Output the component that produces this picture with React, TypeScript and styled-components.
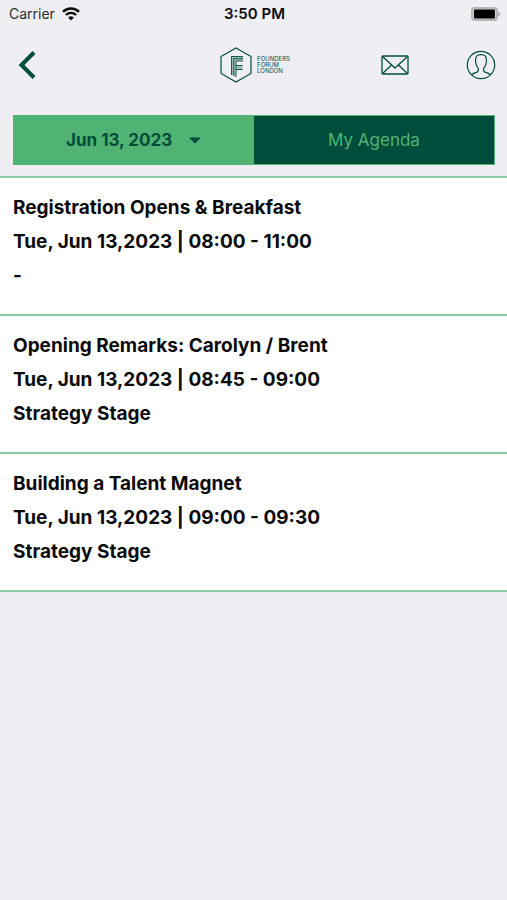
import React from 'react';
import styled, { createGlobalStyle } from 'styled-components';

const palette = {
  page: '#efeef3',
  forest: '#004d3b',
  green: '#50b374',
  line: '#8ccba3',
};

const GlobalStyle = createGlobalStyle`
  *, *::before, *::after { box-sizing: border-box; }
  body {
    margin: 0;
    background: ${palette.page};
    color: #0b0b0c;
    font-family: Inter, 'Liberation Sans', sans-serif;
  }
`;

const StatusBar = styled.div`
  display: grid;
  grid-template-columns: 1fr auto 1fr;
  align-items: center;
  height: 28px;
  padding: 0 7px 0 9px;
  font-size: 14px;
  line-height: 20px;
`;

const Carrier = styled.div`
  display: flex;
  align-items: center;
  gap: 7px;
  color: #2b2b2e;
`;

const Clock = styled.time`
  font-size: 15px;
  font-weight: 600;
`;

const Battery = styled.svg`
  justify-self: end;
  display: block;
`;

const NavBar = styled.header`
  display: grid;
  grid-template-columns: 1fr auto 1fr;
  align-items: center;
  height: 74px;
  padding: 0 11px 0 12px;
`;

const IconButton = styled.button`
  display: flex;
  padding: 0;
  border: 0;
  background: none;
  color: ${palette.forest};
  cursor: pointer;
  justify-self: start;
`;

const NavActions = styled.div`
  display: flex;
  align-items: center;
  justify-content: flex-end;
  gap: 57px;
`;

const Brand = styled.a`
  display: flex;
  align-items: center;
  gap: 5px;
  padding-left: 2px;
  color: ${palette.forest};
  text-decoration: none;
`;

const BrandName = styled.span`
  display: flex;
  flex-direction: column;
  font-size: 6px;
  line-height: 6px;
`;

const Filters = styled.nav`
  display: grid;
  grid-template-columns: 1fr 1fr;
  margin: 13px 12px 11px 13px;
  height: 50px;
  font-size: 17px;
`;

const DatePicker = styled.label`
  display: flex;
  align-items: center;
  justify-content: center;
  gap: 16px;
  background: ${palette.green};
  color: ${palette.forest};
`;

const DateSelect = styled.select`
  appearance: none;
  padding: 0;
  border: 0;
  background: none;
  color: inherit;
  font: inherit;
  font-weight: 700;
`;

const AgendaButton = styled.button`
  border: 1px solid ${palette.green};
  border-left: 0;
  padding: 0;
  background: ${palette.forest};
  color: ${palette.green};
  font: inherit;
  cursor: pointer;
`;

const SessionList = styled.ul`
  margin: 0;
  padding: 0;
  list-style: none;
  border-top: 2px solid ${palette.line};
`;

const Session = styled.li`
  display: flex;
  flex-direction: column;
  gap: 10px;
  padding: 18px 13px 26px;
  background: #fff;
  border-bottom: 2px solid ${palette.line};
  font-size: 19px;
  line-height: 24px;
  font-weight: 700;
`;

const SessionTitle = styled.h2`
  margin: 0;
  font: inherit;
`;

const SessionLine = styled.p`
  margin: 0;
`;

const sessions = [
  { title: 'Registration Opens & Breakfast', time: 'Tue, Jun 13,2023 | 08:00 - 11:00', place: '-' },
  { title: 'Opening Remarks: Carolyn / Brent', time: 'Tue, Jun 13,2023 | 08:45 - 09:00', place: 'Strategy Stage' },
  { title: 'Building a Talent Magnet', time: 'Tue, Jun 13,2023 | 09:00 - 09:30', place: 'Strategy Stage' },
];

const WifiIcon = () => (
  <svg width="18" height="14" viewBox="0 0 18 14" fill="none" stroke="#0b0b0c" aria-hidden="true">
    <path d="M1 4.9a11.4 11.4 0 0 1 16 0" strokeWidth="2.5" />
    <path d="M3.9 8a7.3 7.3 0 0 1 10.2 0" strokeWidth="2.3" />
    <path d="M9 13.6 6.2 10.7a4 4 0 0 1 5.6 0z" fill="#0b0b0c" stroke="none" />
  </svg>
);

const BatteryIcon = () => (
  <Battery width="32" height="15" viewBox="0 0 32 15" role="img" aria-label="Battery full">
    <rect x="3" y="0" width="27" height="14" rx="4" fill="#b5b5b8" />
    <rect x="5" y="2" width="23" height="10" rx="2" fill="#d5d4d8" />
    <rect x="6" y="2.500" width="21" height="9" rx="1" fill="#000" />
    <path d="M30.300 4.500c1.200.6 1.700 1.400 1.700 2.500s-.5 1.900-1.700 2.500z" fill="#a9a9ac" />
  </Battery>
);

const BackIcon = () => (
  <svg width="30" height="30" viewBox="0 0 30 30" fill="none" stroke="currentColor" strokeWidth="4" aria-hidden="true">
    <path d="M22 2.500 9.500 15 22 27.500" />
  </svg>
);

const LogoMark = () => (
  <svg width="32" height="36" viewBox="0 0 32 36" fill="none" stroke="currentColor" aria-hidden="true">
    <path d="M16 1 31 9.500v17L16 35 1 26.500v-17z" strokeWidth="1.200" />
    <path d="M11.500 9.500h11.500v4.500h-7v16l-4.500-2.500z" fill="currentColor" fillOpacity=".3" stroke="none" />
    <path d="M16 18.500h6.500v4h-6.500z" fill="currentColor" fillOpacity=".3" stroke="none" />
    <path d="M11.500 28V9.500H23M13.700 29V11.700H23M16 30V14h7M16 18.500h6.500M16 22.500h6.500" strokeWidth=".9" />
  </svg>
);

const MailIcon = () => (
  <svg width="28" height="20" viewBox="0 0 28 20" fill="none" stroke="currentColor" strokeWidth="1.300" strokeLinejoin="round" aria-hidden="true">
    <rect x="1" y="1" width="26" height="18" rx="1" />
    <path d="M1.500 1.500 14 13 26.500 1.500M1.500 18.500 10.500 10M26.500 18.500 17.500 10" />
  </svg>
);

const ProfileIcon = () => (
  <svg width="30" height="30" viewBox="0 0 30 30" fill="none" stroke="currentColor" strokeWidth="1.200" aria-hidden="true">
    <circle cx="15" cy="15" r="13.700" />
    <path d="M5.600 25c.7-1.200 2.200-1.800 4.200-2.300 2.200-.6 2.700-1.200 2.700-3.200 0-1.400-.8-2-1.700-3.500-.6-1-.9-2-1-3.200-.4-.7-.4-1.800-.1-2.300-.6-3.700 1.400-5.800 5.300-5.800s5.900 2.100 5.300 5.800c.3.500.3 1.600-.1 2.300-.1 1.200-.4 2.200-1 3.200-.9 1.500-1.700 2.100-1.700 3.500 0 2 .5 2.600 2.700 3.200 2 .5 3.500 1.100 4.200 2.300" />
  </svg>
);

const CaretIcon = () => (
  <svg width="12" height="7" viewBox="0 0 12 7" aria-hidden="true">
    <path d="M1 .5h10Q11.700 .7 11 1.500L6.600 6Q6 6.500 5.400 6L1 1.500Q.3.700 1 .5z" fill="currentColor" />
  </svg>
);

export default function App() {
  return (
    <>
      <GlobalStyle />
      <StatusBar>
        <Carrier>
          Carrier
          <WifiIcon />
        </Carrier>
        <Clock>3:50 PM</Clock>
        <BatteryIcon />
      </StatusBar>
      <NavBar>
        <IconButton type="button" aria-label="Back">
          <BackIcon />
        </IconButton>
        <Brand href="#" aria-label="Founders Forum London">
          <LogoMark />
          <BrandName>
            <span>FOUNDERS</span>
            <span>FORUM</span>
            <span>LONDON</span>
          </BrandName>
        </Brand>
        <NavActions>
          <IconButton type="button" aria-label="Messages">
            <MailIcon />
          </IconButton>
          <IconButton type="button" aria-label="Profile">
            <ProfileIcon />
          </IconButton>
        </NavActions>
      </NavBar>
      <Filters aria-label="Agenda filters">
        <DatePicker>
          <DateSelect aria-label="Date" defaultValue="2023-06-13">
            <option value="2023-06-13">Jun 13, 2023</option>
          </DateSelect>
          <CaretIcon />
        </DatePicker>
        <AgendaButton type="button">My Agenda</AgendaButton>
      </Filters>
      <main>
        <SessionList>
          {sessions.map((session) => (
            <Session key={session.title}>
              <SessionTitle>{session.title}</SessionTitle>
              <SessionLine>{session.time}</SessionLine>
              <SessionLine>{session.place}</SessionLine>
            </Session>
          ))}
        </SessionList>
      </main>
    </>
  );
}
